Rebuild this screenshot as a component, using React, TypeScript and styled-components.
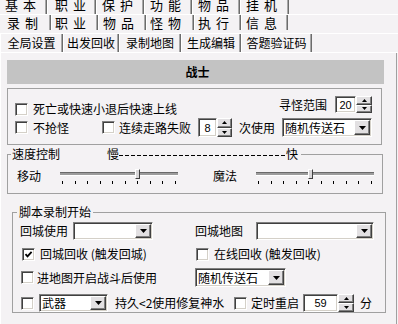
import React from 'react';
import styled, { createGlobalStyle, css } from 'styled-components';

const BG = '#f4f2f4';

const GlobalStyle = createGlobalStyle`
  html, body { margin: 0; padding: 0; background: ${BG}; }
  body {
    font-family: "Noto Sans CJK SC", "Noto Sans", sans-serif;
    font-size: 12px;
    line-height: 14px;
    color: #000;
  }
  *, *::before, *::after { box-sizing: border-box; }
`;

const sunken = css`
  background: #fff;
  border: 1px solid;
  border-color: #808080 #fff #fff #808080;
  box-shadow: inset 1px 1px #404040, inset -1px -1px #d4d0c8;
`;

const raised = css`
  background: #e2e0e2;
  border: 1px solid;
  border-color: #fff #404040 #404040 #fff;
  box-shadow: inset -1px -1px #808080;
`;

const Screen = styled.div`
  width: 398px;
  height: 324px;
  overflow: hidden;
  background: ${BG};
  display: flex;
  flex-direction: column;
`;

const TabRow = styled.div<{ $h: number; $mt?: number; $pb?: number }>`
  display: flex;
  flex-shrink: 0;
  height: ${p => p.$h}px;
  margin-top: ${p => p.$mt ?? 0}px;
  padding-bottom: ${p => p.$pb ?? 0}px;
  border-bottom: 1px solid #fff;
`;

const Tab = styled.div<{ $w: number; $pl?: number; $ml?: number; $fs?: number; $center?: boolean }>`
  flex-shrink: 0;
  width: ${p => p.$w}px;
  margin-left: ${p => p.$ml ?? 0}px;
  display: flex;
  align-items: center;
  justify-content: ${p => (p.$center ? 'center' : 'flex-start')};
  padding-left: ${p => p.$pl ?? 0}px;
  border-left: 1px solid #fff;
  border-right: 1px solid #6c6c6c;
  box-shadow: inset -1px 0 #a8a8a8;
  font-size: ${p => p.$fs ?? 12}px;
  white-space: nowrap;
`;

const Spaced = styled.span`
  display: inline-flex;
  gap: 5px;
`;

const Panel = styled.div`
  flex: 1;
  width: 397px;
  border-left: 1px solid #fff;
  border-right: 1px solid #a0a0a0;
  padding: 7px 0 0 6px;
  display: flex;
  flex-direction: column;
  align-items: flex-start;
`;

const Header = styled.div`
  width: 377px;
  height: 24px;
  flex-shrink: 0;
  background: #c3c3c3;
  display: flex;
  align-items: center;
  justify-content: center;
  padding-left: 4px;
  font-weight: bold;
  margin-bottom: 4px;
`;

const Box = styled.div`
  width: 375px;
  height: 57px;
  flex-shrink: 0;
  border: 1px solid #a0a0a0;
  padding: 7px 9px 0 7px;
  display: flex;
  flex-direction: column;
`;

const Field = styled.fieldset<{ $w: number; $ml?: number; $mt: number }>`
  margin: ${p => p.$mt}px 0 0 ${p => p.$ml ?? 0}px;
  padding: 0;
  min-width: 0;
  width: ${p => p.$w}px;
  flex-shrink: 0;
  border: 1px solid #a0a0a0;
`;

const Legend = styled.legend<{ $ml: number; $pl: number; $pr: number }>`
  margin-left: ${p => p.$ml}px;
  padding: 0 ${p => p.$pr}px 0 ${p => p.$pl}px;
  height: 14px;
  line-height: 14px;
  display: flex;
  align-items: center;
  white-space: nowrap;
`;

const LegendGap = styled.span<{ $w: number }>`
  display: inline-block;
  width: ${p => p.$w}px;
`;

const Dashes = styled.span<{ $w: number }>`
  display: inline-block;
  width: ${p => p.$w}px;
  height: 1px;
  margin-top: 2px;
  background: repeating-linear-gradient(to right, #000 0 4px, transparent 4px 6px);
`;

const FieldBody = styled.div<{ $p: string }>`
  padding: ${p => p.$p};
  display: flex;
  flex-direction: column;
`;

const Row = styled.div<{ $h: number; $mt?: number; $align?: string; $justify?: string; $gap?: number }>`
  display: flex;
  height: ${p => p.$h}px;
  margin-top: ${p => p.$mt ?? 0}px;
  align-items: ${p => p.$align ?? 'center'};
  justify-content: ${p => p.$justify ?? 'flex-start'};
  gap: ${p => p.$gap ?? 0}px;
`;

const GridRow = styled.div<{ $h: number; $mt?: number }>`
  display: grid;
  grid-template-columns: 175px 1fr;
  height: ${p => p.$h}px;
  margin-top: ${p => p.$mt ?? 0}px;
  align-items: center;
`;

const Cluster = styled.div<{ $gap: number; $ml?: number; $mt?: number }>`
  display: flex;
  align-items: center;
  gap: ${p => p.$gap}px;
  margin-left: ${p => p.$ml ?? 0}px;
  margin-top: ${p => p.$mt ?? 0}px;
`;

const Label = styled.span<{ $w?: number; $ml?: number }>`
  white-space: pre;
  flex-shrink: 0;
  ${p => (p.$w ? `width: ${p.$w}px;` : '')}
  margin-left: ${p => p.$ml ?? 0}px;
`;

const CheckBoxEl = styled.span`
  ${sunken};
  width: 13px;
  height: 13px;
  flex-shrink: 0;
  display: flex;
  align-items: center;
  justify-content: center;
`;

const CheckSvg = styled.svg`
  display: block;
`;

const Check = ({ checked }: { checked?: boolean }) => (
  <CheckBoxEl>
    {checked && (
      <CheckSvg width="9" height="9" viewBox="0 0 9 9">
        <polyline points="1.5,4.2 3.5,6.4 7.6,1.8" fill="none" stroke="#000" strokeWidth="1.8" />
      </CheckSvg>
    )}
  </CheckBoxEl>
);

const CheckItem = styled.div<{ $w?: number; $gap: number; $ml?: number }>`
  display: flex;
  align-items: center;
  gap: ${p => p.$gap}px;
  flex-shrink: 0;
  margin-left: ${p => p.$ml ?? 0}px;
  ${p => (p.$w ? `width: ${p.$w}px;` : '')}
`;

const ArrowSvg = styled.svg`
  display: block;
`;

const Arrow = ({ dir, w }: { dir: 'up' | 'down'; w: number }) => {
  const h = Math.ceil(w / 2);
  const pts = dir === 'down' ? `0,0 ${w},0 ${w / 2},${h}` : `0,${h} ${w},${h} ${w / 2},0`;
  return (
    <ArrowSvg width={w} height={h} viewBox={`0 0 ${w} ${h}`}>
      <polygon points={pts} fill="#000" />
    </ArrowSvg>
  );
};

const ComboFrame = styled.div<{ $w: number; $h: number }>`
  ${sunken};
  width: ${p => p.$w}px;
  height: ${p => p.$h}px;
  flex-shrink: 0;
  display: flex;
  padding: 1px;
`;

const ComboValue = styled.span`
  flex: 1;
  display: flex;
  align-items: center;
  padding-left: 1px;
  white-space: nowrap;
  overflow: hidden;
`;

const DropButton = styled.span`
  ${raised};
  width: 16px;
  flex-shrink: 0;
  display: flex;
  align-items: center;
  justify-content: center;
`;

const Combo = ({ w, h, value }: { w: number; h: number; value?: string }) => (
  <ComboFrame $w={w} $h={h}>
    <ComboValue>{value}</ComboValue>
    <DropButton>
      <Arrow dir="down" w={7} />
    </DropButton>
  </ComboFrame>
);

const SpinWrap = styled.div<{ $h: number }>`
  display: flex;
  height: ${p => p.$h}px;
  flex-shrink: 0;
`;

const SpinInput = styled.div<{ $w: number }>`
  ${sunken};
  width: ${p => p.$w}px;
  display: flex;
  align-items: center;
  justify-content: center;
  font-family: "Liberation Sans", "DejaVu Sans", sans-serif;
  font-size: 11px;
`;

const SpinButtons = styled.div<{ $w: number }>`
  width: ${p => p.$w}px;
  display: flex;
  flex-direction: column;
`;

const SpinBtn = styled.span`
  ${raised};
  flex: 1;
  display: flex;
  align-items: center;
  justify-content: center;
`;

const Spin = ({ value, w, bw, h }: { value: string; w: number; bw: number; h: number }) => (
  <SpinWrap $h={h}>
    <SpinInput $w={w}>{value}</SpinInput>
    <SpinButtons $w={bw}>
      <SpinBtn>
        <Arrow dir="up" w={5} />
      </SpinBtn>
      <SpinBtn>
        <Arrow dir="down" w={5} />
      </SpinBtn>
    </SpinButtons>
  </SpinWrap>
);

const SliderBox = styled.div`
  width: 118px;
  display: flex;
  flex-direction: column;
  flex-shrink: 0;
`;

const TrackArea = styled.div`
  position: relative;
  height: 10px;
  display: flex;
  align-items: center;
`;

const Track = styled.div`
  width: 100%;
  height: 4px;
  background: #9c9c9c;
  border-top: 1px solid #6a6a6a;
  border-bottom: 1px solid #fff;
`;

const Thumb = styled.span`
  position: absolute;
  top: 0;
  width: 5px;
  height: 10px;
  background: #d8d6d8;
  border: 1px solid;
  border-color: #fff #404040 #404040 #fff;
`;

const Ticks = styled.div`
  display: flex;
  justify-content: space-between;
  padding: 0 2px;
  margin-top: 2px;
  height: 3px;
`;

const Tick = styled.span`
  width: 1px;
  height: 3px;
  background: #000;
`;

const Slider = ({ thumb }: { thumb: number }) => (
  <SliderBox>
    <TrackArea>
      <Track />
      <Thumb style={{ left: `${thumb}px` }} />
    </TrackArea>
    <Ticks>
      {Array.from({ length: 10 }).map((_, i) => (
        <Tick key={i} />
      ))}
    </Ticks>
  </SliderBox>
);

const row1 = [
  { t: ['基', '本'], w: 53, pl: 10, ml: -6 },
  { t: ['职', '业'], w: 49, pl: 7 },
  { t: ['保', '护'], w: 48, pl: 5 },
  { t: ['功', '能'], w: 48, pl: 5 },
  { t: ['物', '品'], w: 48, pl: 5 },
  { t: ['挂', '机'], w: 49, pl: 5 },
];

const row2 = [
  { t: ['录', '制'], w: 57, pl: 12, ml: -6 },
  { t: ['职', '业'], w: 47, pl: 3 },
  { t: ['物', '品'], w: 48, pl: 4 },
  { t: ['怪', '物'], w: 48, pl: 3 },
  { t: ['执', '行'], w: 47, pl: 3 },
  { t: ['信', '息'], w: 47, pl: 4 },
];

const row3 = [
  { t: '全局设置', w: 63 },
  { t: '出发回收', w: 56 },
  { t: '录制地图', w: 62 },
  { t: '生成编辑', w: 60 },
  { t: '答题验证码', w: 71 },
];

export default function App() {
  return (
    <>
      <GlobalStyle />
      <Screen>
        <TabRow $h={20} $mt={-5}>
          {row1.map((tab, i) => (
            <Tab key={i} $w={tab.w} $pl={tab.pl} $ml={tab.ml} $fs={13}>
              <Spaced>
                {tab.t.map(c => (
                  <span key={c}>{c}</span>
                ))}
              </Spaced>
            </Tab>
          ))}
        </TabRow>
        <TabRow $h={19} $pb={3}>
          {row2.map((tab, i) => (
            <Tab key={i} $w={tab.w} $pl={tab.pl} $ml={tab.ml} $fs={13}>
              <Spaced>
                {tab.t.map(c => (
                  <span key={c}>{c}</span>
                ))}
              </Spaced>
            </Tab>
          ))}
        </TabRow>
        <TabRow $h={19}>
          {row3.map((tab, i) => (
            <Tab key={i} $w={tab.w} $center>
              {tab.t}
            </Tab>
          ))}
        </TabRow>

        <Panel>
          <Header>战士</Header>

          <Box>
            <Row $h={18} $align="flex-start" $justify="space-between">
              <Cluster $gap={5} $mt={6}>
                <Check />
                <Label>死亡或快速小退后快速上线</Label>
              </Cluster>
              <Cluster $gap={8}>
                <Label>寻怪范围</Label>
                <Spin value="20" w={21} bw={16} h={17} />
              </Cluster>
            </Row>
            <Row $h={19} $mt={4} $gap={7}>
              <CheckItem $w={80} $gap={5}>
                <Check />
                <Label>不抢怪</Label>
              </CheckItem>
              <CheckItem $gap={4}>
                <Check />
                <Label>连续走路失败</Label>
              </CheckItem>
              <Spin value="8" w={19} bw={15} h={19} />
              <Label>次使用</Label>
              <Combo w={90} h={19} value="随机传送石" />
            </Row>
          </Box>

          <Field $w={376} $mt={2}>
            <Legend $ml={3} $pl={1} $pr={3}>
              <span>速度控制</span>
              <LegendGap $w={47} />
              <span>慢</span>
              <Dashes $w={167} />
              <span>快</span>
            </Legend>
            <FieldBody $p="7px 0 9px 9px">
              <Row $h={16}>
                <Cluster $gap={19}>
                  <Label>移动</Label>
                  <Slider thumb={75} />
                </Cluster>
                <Cluster $gap={19} $ml={35}>
                  <Label>魔法</Label>
                  <Slider thumb={52} />
                </Cluster>
              </Row>
            </FieldBody>
          </Field>

          <Field $w={374} $ml={5} $mt={11}>
            <Legend $ml={4} $pl={2} $pr={2}>
              脚本录制开始
            </Legend>
            <FieldBody $p="3px 0 0 7px">
              <GridRow $h={18}>
                <Cluster $gap={5}>
                  <Label>回城使用</Label>
                  <Combo w={80} h={18} />
                </Cluster>
                <Cluster $gap={13}>
                  <Label>回城地图</Label>
                  <Combo w={118} h={18} />
                </Cluster>
              </GridRow>
              <GridRow $h={14} $mt={7}>
                <CheckItem $gap={5} $ml={2}>
                  <Check checked />
                  <Label>回城回收 (触发回城)</Label>
                </CheckItem>
                <CheckItem $gap={5} $ml={1}>
                  <Check />
                  <Label>在线回收 (触发回收)</Label>
                </CheckItem>
              </GridRow>
              <GridRow $h={19} $mt={7}>
                <CheckItem $gap={3} $ml={1}>
                  <Check />
                  <Label>进地图开启战斗后使用</Label>
                </CheckItem>
                <Cluster $gap={0}>
                  <Combo w={91} h={19} value="随机传送石" />
                </Cluster>
              </GridRow>
              <Row $h={18} $mt={7}>
                <CheckItem $gap={5} $ml={1}>
                  <Check />
                  <Combo w={69} h={18} value="武器" />
                </CheckItem>
                <Label $ml={7} $w={119}>
                  持久&lt;2使用修复神水
                </Label>
                <CheckItem $gap={4}>
                  <Check />
                  <Label>定时重启</Label>
                </CheckItem>
                <Cluster $gap={6} $ml={4}>
                  <Spin value="59" w={35} bw={16} h={18} />
                  <Label>分</Label>
                </Cluster>
              </Row>
            </FieldBody>
          </Field>
        </Panel>
      </Screen>
    </>
  );
}
